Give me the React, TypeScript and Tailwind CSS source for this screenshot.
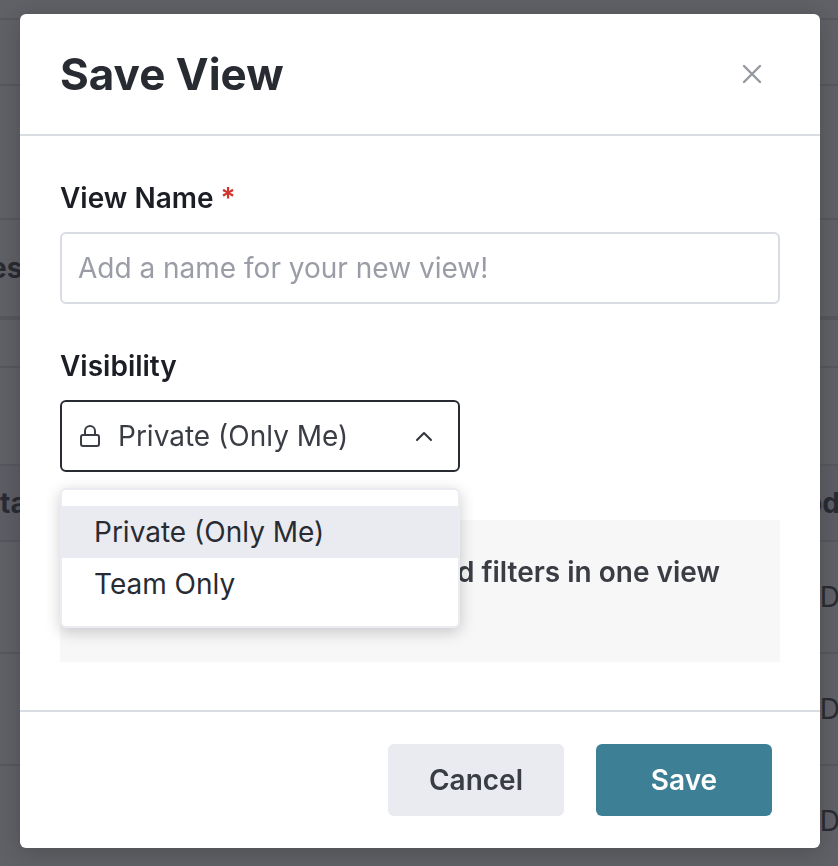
import { useState } from "react";

const rows = [
  { className: "h-5 border-b-2" },
  { className: "h-[66px] border-b-2" },
  { className: "h-[134px] border-b-2" },
  { className: "h-[100px] border-b-4 font-bold", left: "es" },
  { className: "h-12 border-b-2" },
  { className: "h-[98px] border-b-2" },
  { className: "h-[76px] border-b-2 bg-[#5d5d65] font-bold", left: "ta", right: "od" },
  { className: "h-28 border-b-2", left: "-", right: "D" },
  { className: "h-28 border-b-2", left: "-", right: "D" },
  { className: "h-28 border-b-2", left: "-", right: "D" },
];

const leftOffset: Record<string, string> = {
  es: "-ml-2.5",
  ta: "ml-0",
  "-": "-ml-3",
};

const options = ["Private (Only Me)", "Team Only"];

const TablePage = () => {
  return (
    <div aria-hidden="true" className="h-screen overflow-hidden bg-[#606166] text-[28px] text-[#292b33]">
      {rows.map((row, index) => (
        <div
          key={index}
          className={`flex items-center justify-between border-[#57585e] ${row.className}`}
        >
          <span className={row.left ? leftOffset[row.left] : ""}>{row.left}</span>
          <span className="-mr-0.5">{row.right}</span>
        </div>
      ))}
    </div>
  );
};

const LockIcon = () => (
  <svg
    className="pointer-events-none absolute left-[18px] top-[22px] h-7 w-6"
    viewBox="0 0 24 28"
    fill="none"
    stroke="#3b3d45"
    strokeWidth="2"
  >
    <rect x="3" y="13" width="18" height="11" rx="2" />
    <path d="M7 13V9a5 5 0 0 1 10 0v4" />
  </svg>
);

const ChevronIcon = () => (
  <svg
    className="pointer-events-none absolute right-6 top-6 h-6 w-6"
    viewBox="0 0 24 24"
    fill="none"
    stroke="#31333b"
    strokeWidth="2"
    strokeLinecap="round"
    strokeLinejoin="round"
  >
    <path d="M5 16l7-7 7 7" />
  </svg>
);

const CloseIcon = () => (
  <svg
    className="h-6 w-6"
    viewBox="0 0 24 24"
    fill="none"
    stroke="#9698a1"
    strokeWidth="2.4"
    strokeLinecap="round"
  >
    <path d="M4 4l16 16M20 4L4 20" />
  </svg>
);

const SaveViewDialog = () => {
  const [name, setName] = useState("");
  const [visibility, setVisibility] = useState(options[0]);

  return (
    <div
      role="dialog"
      aria-modal="true"
      aria-labelledby="dialog-title"
      className="w-full max-w-[800px] rounded-md bg-white shadow-[0_4px_24px_rgba(0,0,0,0.2)]"
    >
      <header className="flex h-[122px] items-center justify-between border-b-2 border-[#d9dde2] pl-10 pr-14">
        <h2 id="dialog-title" className="text-[44px] font-bold text-[#292b33]">
          Save View
        </h2>
        <button type="button" aria-label="Close">
          <CloseIcon />
        </button>
      </header>

      <div className="px-10 pb-12 pt-11">
        <div className="flex flex-col gap-4">
          <label htmlFor="view-name" className="text-[28px] leading-9 font-semibold text-[#1c1e26]">
            View Name <span className="text-[#d0342c]">*</span>
          </label>
          <input
            id="view-name"
            type="text"
            value={name}
            onChange={(e) => setName(e.target.value)}
            placeholder="Add a name for your new view!"
            className="h-18 w-full rounded-md border-2 border-[#d9dce3] px-4 text-[28px] placeholder:text-[#9b9da6]"
          />
        </div>

        <div className="mt-11 flex flex-col gap-4">
          <label htmlFor="visibility" className="text-[28px] leading-9 font-semibold text-[#1c1e26]">
            Visibility
          </label>
          <div className="relative w-full max-w-[400px]">
            <LockIcon />
            <select
              id="visibility"
              value={visibility}
              onChange={(e) => setVisibility(e.target.value)}
              className="h-18 w-full appearance-none rounded-md border-2 border-[#292b33] pl-14 pr-14 text-[28px] text-[#3b3d45]"
            >
              {options.map((option) => (
                <option key={option}>{option}</option>
              ))}
            </select>
            <ChevronIcon />

            <ul className="absolute inset-x-0 top-full z-10 mt-4 rounded-md border-2 border-[#ebecf1] bg-white py-4 shadow-[0_4px_16px_rgba(0,0,0,0.2)]">
              {options.map((option) => (
                <li key={option}>
                  <button
                    type="button"
                    onClick={() => setVisibility(option)}
                    className={`h-13 w-full px-8 text-left text-[28px] text-[#292b33] ${
                      option === visibility ? "bg-[#eaebf0]" : "bg-white"
                    }`}
                  >
                    {option}
                  </button>
                </li>
              ))}
            </ul>
          </div>
        </div>

        <div className="mt-12 min-h-[142px] bg-[#f7f7f7] px-15 py-8">
          <p className="text-right text-[28px] leading-10 font-semibold text-[#3b3d45]">
            and filters in one view
          </p>
        </div>
      </div>

      <footer className="flex justify-end gap-8 border-t-2 border-[#d9dce3] px-12 py-8">
        <button
          type="button"
          className="h-18 w-44 rounded-md bg-[#eaebf0] text-[28px] font-semibold text-[#3b3d45]"
        >
          Cancel
        </button>
        <button
          type="button"
          className="h-18 w-44 rounded-md bg-[#3d8096] text-[28px] font-semibold text-white"
        >
          Save
        </button>
      </footer>
    </div>
  );
};

const App = () => {
  return (
    <div className="font-['Inter',sans-serif]">
      <TablePage />
      <div className="fixed inset-0 flex items-start justify-center overflow-hidden pl-5 pr-[18px] pt-3.5">
        <SaveViewDialog />
      </div>
    </div>
  );
};

export default App;
